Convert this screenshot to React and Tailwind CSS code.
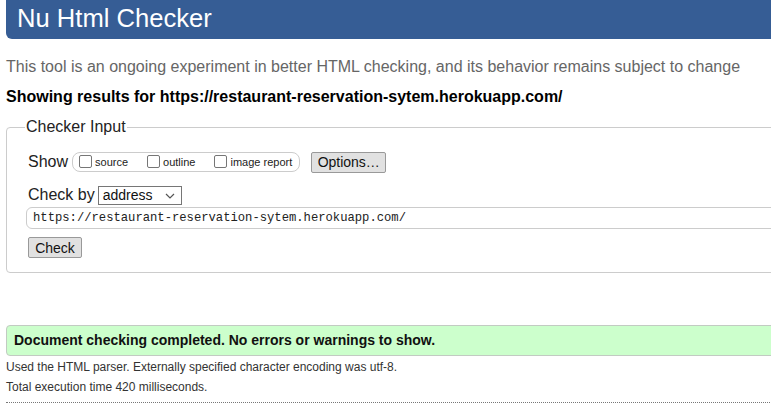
import React from 'react'

function Box() {
  return <span className="inline-block w-[13px] h-[13px] border border-[#767676] rounded-[2px] bg-white mr-[3px] align-[-2px]" />
}

export default function App() {
  return (
    <div className="w-[771px] h-[409px] overflow-hidden bg-white text-[#000] font-['Liberation_Sans',Arial,sans-serif]">
      <div className="ml-[6px] w-[800px]">
        {/* header bar */}
        <div className="h-[39px] bg-[#365d95] rounded-bl-[6px] pl-[11px] flex items-center">
          <h1 className="text-[25.6px] leading-none text-white pb-[2px]">Nu Html Checker</h1>
        </div>

        <p className="mt-[19px] text-[16px] leading-[18px] text-[#666]">
          This tool is an ongoing experiment in better HTML checking, and its behavior remains subject to change
        </p>
        <p className="mt-[12px] text-[16px] leading-[18px] font-bold">
          Showing results for https://restaurant-reservation-sytem.herokuapp.com/
        </p>

        {/* checker input */}
        <fieldset className="mt-[12px] border border-[#ccc] rounded-[4px] pl-[20px] pr-0 pb-[14px] pt-[12px] h-[155px]">
          <legend className="text-[16px] leading-[18px] px-[1px] -ml-[2px] text-[#222]">Checker Input</legend>

          <div className="flex items-center mt-[2px]">
            <span className="text-[16px] text-[#222] mr-[4px] ml-[1px]">Show</span>
            <div className="h-[20px] border border-[#ccc] rounded-[8px] flex items-center pl-[6px] pr-[7px] text-[11px] text-[#222]">
              <label className="mr-[19px]"><Box />source</label>
              <label className="mr-[19px]"><Box />outline</label>
              <label><Box />image report</label>
            </div>
            <button className="ml-[11px] h-[21px] w-[75px] bg-[#e1e1e1] border border-[#999] rounded-[2px] text-[14px] text-[#111] leading-none">
              Options…
            </button>
          </div>

          <div className="flex items-center mt-[9px]">
            <span className="text-[16px] text-[#222] ml-[1px] mr-[3px]">Check by</span>
            <div className="w-[84px] h-[19px] border border-[#767676] flex items-center justify-between pl-[4px] pr-[6px] text-[14px] text-[#111]">
              <span>address</span>
              <svg width="10" height="6" viewBox="0 0 10 6" className="mt-[1px]">
                <path d="M1 1 L5 5 L9 1" fill="none" stroke="#555" strokeWidth="1.2" />
              </svg>
            </div>
          </div>

          <div className="-ml-[1px] h-[22px] border border-[#ccc] rounded-[6px] flex items-center pl-[6px] font-['Liberation_Mono','Courier_New',monospace] text-[12.2px] text-[#222]">
            https://restaurant-reservation-sytem.herokuapp.com/
          </div>

          <button className="mt-[8px] ml-[1px] h-[21px] w-[54px] bg-[#e1e1e1] border border-[#999] rounded-[2px] text-[14px] text-[#111] leading-none">
            Check
          </button>
        </fieldset>

        {/* result */}
        <div className="mt-[52px] h-[31px] bg-[#ccffcc] border border-[#c2cbc2] rounded-l-[4px] flex items-center pl-[7px]">
          <p className="text-[14px] font-bold text-[#111]">Document checking completed. No errors or warnings to show.</p>
        </div>
        <p className="mt-[1px] text-[12px] leading-[20px] text-[#333]">
          Used the HTML parser. Externally specified character encoding was utf-8.
        </p>
        <p className="text-[12px] leading-[20px] text-[#333]">Total execution time 420 milliseconds.</p>
        <div className="mt-[5px] border-t border-dotted border-[#777]" />
      </div>
    </div>
  )
}
